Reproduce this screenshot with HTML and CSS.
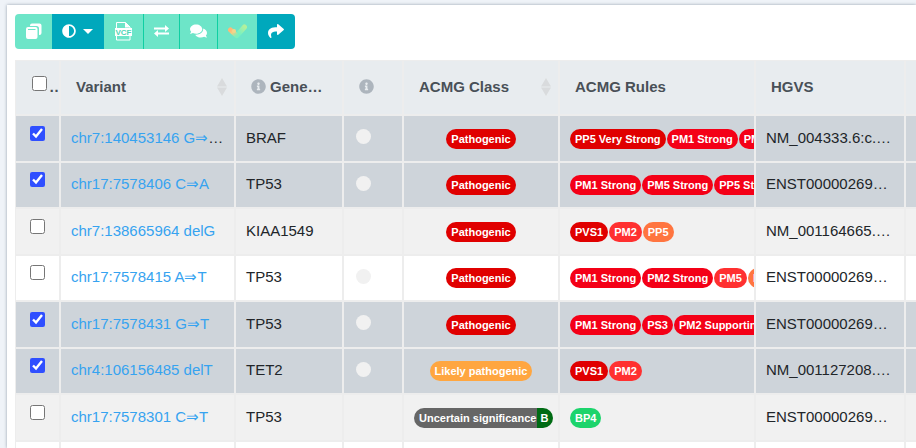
FILE: index.html
```
<!doctype html>
<html lang="en">

<head>
  <meta charset="UTF-8" />
  <meta name="viewport" content="width=device-width, initial-scale=1.0" />
  <title>Variants</title>
  <link rel="stylesheet" href="styles.css">
</head>

<body>
  <svg class="sprite" aria-hidden="true">
    <symbol id="info" viewBox="0 0 512 512">
      <path d="M256 8C119.043 8 8 119.083 8 256c0 136.997 111.043 248 248 248s248-111.003 248-248C504 119.083 392.957 8 256 8zm0 110c23.196 0 42 18.804 42 42s-18.804 42-42 42-42-18.804-42-42 18.804-42 42-42zm56 254c0 6.627-5.373 12-12 12h-88c-6.627 0-12-5.373-12-12v-24c0-6.627 5.373-12 12-12h12v-64h-12c-6.627 0-12-5.373-12-12v-24c0-6.627 5.373-12 12-12h64c6.627 0 12 5.373 12 12v100h12c6.627 0 12 5.373 12 12v24z" />
    </symbol>
    <symbol id="sort" viewBox="0 0 10 18">
      <path d="M5 0l5 8.500H0zM0 9.500h10l-5 8.500z" />
    </symbol>
  </svg>

  <main class="panel">
    <div class="toolbar">
      <button type="button" class="btn" aria-label="Select variants">
        <svg width="17" height="16" viewBox="0 0 17 16">
          <path d="M5 2.500Q5 .5 7 .5h7.500q2 0 2 2V10q0 2-2 2h-.5V5.500Q14 3 11.500 3H5z" />
          <path fill-rule="evenodd" d="M3 4h7.500q2 0 2 2v8q0 2-2 2H3q-2 0-2-2V6q0-2 2-2zm0 2v1h7.500V6z" />
        </svg>
      </button>
      <button type="button" class="btn btn-dark" aria-label="Contrast">
        <svg width="14" height="14" viewBox="0 0 512 512">
          <path d="M8 256c0 136.966 111.033 248 248 248s248-111.034 248-248S392.966 8 256 8 8 119.033 8 256zm248 184V72c101.705 0 184 82.311 184 184 0 101.705-82.311 184-184 184z" />
        </svg>
        <svg width="12" height="6" viewBox="0 0 12 6">
          <path d="M1 1h10L6 6z" />
        </svg>
      </button>
      <button type="button" class="btn btn-split" aria-label="Download VCF">
        <svg width="19" height="20" viewBox="0 0 19 20">
          <path class="line" d="M2.500 7.500V1.500h9l4.500 4.500v1.500M2.500 15v4H16v-4" />
          <path d="M11 1v5.500h5z" />
          <path d="M1 7h17v8H1z" />
          <text class="vcf" x="9.500" y="14" text-anchor="middle">VCF</text>
        </svg>
      </button>
      <button type="button" class="btn btn-split" aria-label="Compare">
        <svg width="15" height="12" viewBox="0 0 15 12">
          <path d="M0 2.500h11V0L15 3.500l-4 3.500V4.500H0zM15 9.500H4V12L0 8.500 4 5v2.500h11z" />
        </svg>
      </button>
      <button type="button" class="btn btn-split" aria-label="Comments">
        <svg width="17" height="16" viewBox="0 0 576 512">
          <path d="M416 192c0-88.400-93.100-160-208-160S0 103.600 0 192c0 34.300 14.100 65.900 38 92-13.400 30.200-35.500 54.200-35.800 54.500-2.200 2.300-2.800 5.700-1.500 8.700S4.800 352 8 352c36.600 0 66.900-12.300 88.700-25 32.200 15.700 70.300 25 111.300 25 114.900 0 208-71.600 208-160zm122 220c23.900-26 38-57.700 38-92 0-66.900-53.500-124.200-129.300-148.100.9 6.600 1.300 13.300 1.300 20.100 0 105.900-107.700 192-240 192-10.800 0-21.300-.8-31.700-1.900C207.800 439.600 281.800 480 368 480c41 0 79.100-9.200 111.300-25 21.800 12.700 52.100 25 88.700 25 3.200 0 6.100-1.900 7.300-4.800 1.300-2.900.7-6.300-1.500-8.700-.3-.3-22.400-24.200-35.800-54.500z" />
        </svg>
      </button>
      <button type="button" class="btn" aria-label="Classify">
        <svg width="19" height="16" viewBox="0 0 19 16">
          <defs>
            <linearGradient id="left-arm" x1="0" y1="0" x2="1" y2="1">
              <stop offset="0" stop-color="#ffb877" />
              <stop offset=".4" stop-color="#f3cf83" />
              <stop offset="1" stop-color="#7df0bd" />
            </linearGradient>
            <linearGradient id="right-arm" x1="1" y1="0" x2="0" y2="1">
              <stop offset="0" stop-color="#b2f09c" />
              <stop offset="1" stop-color="#62f2cf" />
            </linearGradient>
          </defs>
          <path class="arm" stroke="url(#right-arm)" d="M9 12.500L16.500 4" />
          <path class="arm" stroke="url(#left-arm)" d="M2.500 7L8.500 12.500" />
          <circle cx="6" cy="8" r="2" fill="#f3d58c" />
        </svg>
      </button>
      <button type="button" class="btn btn-dark" aria-label="Share">
        <svg width="18" height="16" viewBox="-16 0 544 512">
          <path d="M503.691 189.836L327.687 37.851C312.281 24.546 288 35.347 288 56.015v80.053C127.371 137.907 0 170.100 0 322.326c0 61.441 39.581 122.309 83.333 154.132 13.653 9.931 33.111-2.533 28.077-18.631C66.066 312.814 132.917 274.316 288 272.085V360c0 20.700 24.300 31.453 39.687 18.164l176.004-152c11.071-9.562 11.086-26.753 0-36.328z" />
        </svg>
      </button>
    </div>

    <table class="variants">
      <colgroup>
        <col class="col-check">
        <col class="col-variant">
        <col class="col-gene">
        <col class="col-info">
        <col class="col-class">
        <col class="col-rules">
        <col class="col-hgvs">
        <col>
      </colgroup>
      <thead>
        <tr>
          <th><input type="checkbox" aria-label="Select all">…</th>
          <th><div class="head">Variant <svg class="sort"><use href="#sort" /></svg></div></th>
          <th><div class="head"><svg class="info"><use href="#info" /></svg>Gene…</div></th>
          <th><div class="head"><svg class="info"><use href="#info" /></svg></div></th>
          <th><div class="head">ACMG Class <svg class="sort"><use href="#sort" /></svg></div></th>
          <th><div class="head">ACMG Rules</div></th>
          <th><div class="head">HGVS</div></th>
          <th></th>
        </tr>
      </thead>
      <tbody>
        <tr class="selected">
          <td><input type="checkbox" aria-label="Select chr7:140453146" checked></td>
          <td><a href="#">chr7:140453146 G⇒</a>…</td>
          <td>BRAF</td>
          <td><span class="dot"></span></td>
          <td><div class="pills center"><span class="pill pathogenic">Pathogenic</span></div></td>
          <td><div class="pills"><span class="pill very-strong">PP5 Very Strong</span><span class="pill strong">PM1 Strong</span><span class="pill strong">PM2</span></div></td>
          <td>NM_004333.6:c.…</td>
          <td></td>
        </tr>
        <tr class="selected">
          <td><input type="checkbox" aria-label="Select chr17:7578406" checked></td>
          <td><a href="#">chr17:7578406 C⇒A</a></td>
          <td>TP53</td>
          <td><span class="dot"></span></td>
          <td><div class="pills center"><span class="pill pathogenic">Pathogenic</span></div></td>
          <td><div class="pills"><span class="pill strong">PM1 Strong</span><span class="pill strong">PM5 Strong</span><span class="pill strong">PP5 Strong</span></div></td>
          <td>ENST00000269…</td>
          <td></td>
        </tr>
        <tr>
          <td><input type="checkbox" aria-label="Select chr7:138665964"></td>
          <td><a href="#">chr7:138665964 delG</a></td>
          <td>KIAA1549</td>
          <td></td>
          <td><div class="pills center"><span class="pill pathogenic">Pathogenic</span></div></td>
          <td><div class="pills"><span class="pill very-strong">PVS1</span><span class="pill moderate">PM2</span><span class="pill supporting">PP5</span></div></td>
          <td>NM_001164665.…</td>
          <td></td>
        </tr>
        <tr>
          <td><input type="checkbox" aria-label="Select chr17:7578415"></td>
          <td><a href="#">chr17:7578415 A⇒T</a></td>
          <td>TP53</td>
          <td><span class="dot"></span></td>
          <td><div class="pills center"><span class="pill pathogenic">Pathogenic</span></div></td>
          <td><div class="pills"><span class="pill strong">PM1 Strong</span><span class="pill strong">PM2 Strong</span><span class="pill moderate">PM5</span><span class="pill supporting">PP5</span></div></td>
          <td>ENST00000269…</td>
          <td></td>
        </tr>
        <tr class="selected">
          <td><input type="checkbox" aria-label="Select chr17:7578431" checked></td>
          <td><a href="#">chr17:7578431 G⇒T</a></td>
          <td>TP53</td>
          <td><span class="dot"></span></td>
          <td><div class="pills center"><span class="pill pathogenic">Pathogenic</span></div></td>
          <td><div class="pills"><span class="pill strong">PM1 Strong</span><span class="pill strong">PS3</span><span class="pill strong">PM2 Supporting</span></div></td>
          <td>ENST00000269…</td>
          <td></td>
        </tr>
        <tr class="selected">
          <td><input type="checkbox" aria-label="Select chr4:106156485" checked></td>
          <td><a href="#">chr4:106156485 delT</a></td>
          <td>TET2</td>
          <td><span class="dot"></span></td>
          <td><div class="pills center"><span class="pill likely">Likely pathogenic</span></div></td>
          <td><div class="pills"><span class="pill very-strong">PVS1</span><span class="pill moderate">PM2</span></div></td>
          <td>NM_001127208.…</td>
          <td></td>
        </tr>
        <tr>
          <td><input type="checkbox" aria-label="Select chr17:7578301"></td>
          <td><a href="#">chr17:7578301 C⇒T</a></td>
          <td>TP53</td>
          <td></td>
          <td><div class="pills center joined"><span class="pill uncertain">Uncertain significance</span><span class="pill benign">B</span></div></td>
          <td><div class="pills"><span class="pill bp">BP4</span></div></td>
          <td>ENST00000269…</td>
          <td></td>
        </tr>
        <tr>
          <td></td>
          <td></td>
          <td></td>
          <td></td>
          <td></td>
          <td></td>
          <td></td>
          <td></td>
        </tr>
      </tbody>
    </table>
  </main>
</body>

</html>
```

FILE: styles.css
```
* {
  box-sizing: border-box;
}

body {
  margin: 0;
  height: 100vh;
  overflow: hidden;
  padding: 5px 0 0 7px;
  background-color: #eff3f8;
  color: #212529;
  font-family: 'Liberation Sans', Arial, sans-serif;
  font-size: 15px;
  line-height: 22px;
}

svg {
  flex: none;
  fill: currentColor;
}

.sprite {
  display: none;
}

.panel {
  height: 100%;
  overflow: hidden;
  padding: 9px 0 0 8px;
  background-color: #fff;
  box-shadow: 0 0 3px rgba(60, 80, 100, 0.5);
}

/* toolbar */

.toolbar {
  display: flex;
  margin-bottom: 11px;
}

.btn {
  display: flex;
  align-items: center;
  gap: 6px;
  height: 35px;
  padding: 0 10px 2px;
  border: 0;
  background-color: #6de5c8;
  color: #fff;
  cursor: pointer;
}

.btn:first-child {
  border-radius: 4px 0 0 4px;
}

.btn:last-child {
  border-radius: 0 4px 4px 0;
}

.btn-dark {
  background-color: #00a8bc;
}

.btn-split {
  border-right: 1px solid #0fcfa2;
}

.line {
  fill: none;
  stroke: #fff;
}

.vcf {
  fill: #4fd6b5;
  font-family: 'Liberation Sans', Arial, sans-serif;
  font-size: 8px;
  font-weight: bold;
}

.arm {
  fill: none;
  stroke-width: 5;
  stroke-linecap: round;
}

/* variants table */

.variants {
  width: 100%;
  table-layout: fixed;
  border-collapse: separate;
  border-spacing: 0;
}

.col-check {
  width: 45px;
}

.col-variant {
  width: 175px;
}

.col-gene {
  width: 108px;
}

.col-info {
  width: 60px;
}

.col-class {
  width: 156px;
}

.col-rules {
  width: 196px;
}

.col-hgvs {
  width: 150px;
}

th,
td {
  overflow: hidden;
  border: 1px solid #ededed;
  text-align: left;
  white-space: nowrap;
  vertical-align: middle;
}

th:last-child,
td:last-child {
  border-right: 0;
}

th {
  height: 55px;
  padding: 0 0 2px 15px;
  background-color: #e8ecef;
  color: #495057;
}

td {
  height: 47px;
  padding: 0 10px 2px;
}

tbody tr:nth-child(odd) {
  background-color: #f1f1f1;
}

tbody tr:nth-child(even) td {
  height: 46px;
}

tbody tr.selected {
  background-color: #ced4da;
}

input[type='checkbox'] {
  display: block;
  width: 15px;
  height: 15px;
  margin: 0 4px 9px;
  accent-color: #2f4fff;
}

th input[type='checkbox'] {
  display: inline-block;
  margin: 0 2px 0 1px;
  vertical-align: 1px;
}

a {
  color: #36a3f0;
  text-decoration: none;
}

a:hover {
  text-decoration: underline;
}

.head {
  display: flex;
  align-items: center;
}

.info {
  width: 15px;
  height: 15px;
  margin-right: 4px;
  color: #adb5bd;
}

.sort {
  width: 10px;
  height: 18px;
  margin: 0 7px 0 auto;
  color: #d9dbdd;
}

.dot {
  display: block;
  width: 15px;
  height: 15px;
  margin: 0 2px 2px;
  border-radius: 50%;
  background-color: #f1f1f1;
}

/* classification pills */

.pills {
  display: flex;
  gap: 1px;
  margin-top: 2px;
}

.pills.center {
  justify-content: safe center;
}

.pills.joined {
  gap: 0;
}

.pill {
  flex: none;
  height: 20px;
  padding: 0 5px;
  border-radius: 10px;
  color: #fff;
  font-size: 11px;
  font-weight: bold;
  line-height: 20px;
}

.pathogenic,
.very-strong {
  background-color: #e00000;
}

.strong {
  background-color: #f40017;
}

.moderate {
  background-color: #ff3030;
}

.supporting {
  background-color: #ff7540;
}

.likely {
  background-color: #ffa640;
}

.uncertain {
  padding-right: 1px;
  border-radius: 10px 0 0 10px;
  background-color: #666;
}

.benign {
  padding: 0 5px 0 3px;
  border-radius: 0 10px 10px 0;
  background-color: #006b14;
}

.bp {
  background-color: #1cd46c;
}
```
